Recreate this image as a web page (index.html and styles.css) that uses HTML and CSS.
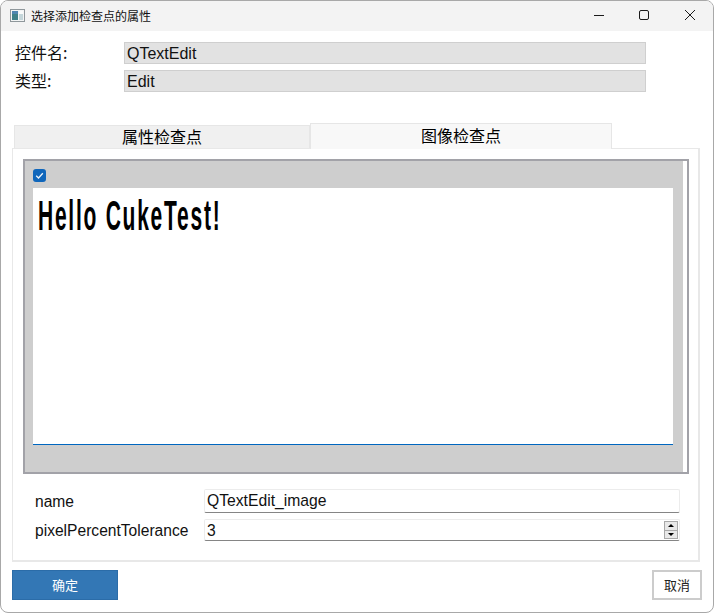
FILE: index.html
```html
<!DOCTYPE html>
<html lang="zh">
<head>
<meta charset="utf-8">
<title>选择添加检查点的属性</title>
<link rel="stylesheet" href="styles.css">
</head>
<body>
<div class="window">
  <header class="titlebar">
    <svg class="app-icon" width="15" height="13" viewBox="0 0 15 13">
      <rect x="0.5" y="0.5" width="14" height="12" fill="#f2f4f4" stroke="#8f979b"/>
      <rect x="2" y="2" width="6" height="9" fill="#3f8088"/>
      <rect x="2" y="2" width="6" height="3" fill="#4f86b0"/>
      <rect x="9" y="2" width="4" height="3" fill="#f8fafa"/>
      <rect x="9" y="5" width="4" height="6" fill="#c4d6da"/>
    </svg>
    <span class="title-text">选择添加检查点的属性</span>
    <div class="controls">
      <svg class="ctl" width="46" height="30" viewBox="0 0 46 30"><path d="M19 14.5H29" stroke="#1a1a1a" fill="none"/></svg>
      <svg class="ctl" width="46" height="30" viewBox="0 0 46 30"><rect x="18.5" y="9.5" width="9" height="9" rx="1.5" stroke="#1a1a1a" fill="none"/></svg>
      <svg class="ctl" width="46" height="30" viewBox="0 0 46 30"><path d="M18 9L28 19M28 9L18 19" stroke="#1a1a1a" fill="none"/></svg>
    </div>
  </header>
  <section class="info">
    <div class="info-row"><span class="info-label">控件名:</span><div class="readonly">QTextEdit</div></div>
    <div class="info-row"><span class="info-label">类型:</span><div class="readonly">Edit</div></div>
  </section>
  <nav class="tabs">
    <div class="tab">属性检查点</div>
    <div class="tab tab-active">图像检查点</div>
  </nav>
  <section class="pane">
    <div class="image-box">
      <div class="image-inner">
        <span class="checkbox">
          <svg width="9" height="9" viewBox="0 0 9 9"><path d="M1.2 4.8L3.5 7L7.8 2.2" stroke="#eef5fb" stroke-width="1.3" fill="none"/></svg>
        </span>
        <div class="canvas"><span class="hello">Hello CukeTest!</span></div>
      </div>
      <div class="image-strip"></div>
    </div>
    <div class="form">
      <div class="form-row form-row-name"><label class="form-label">name</label><div class="field">QTextEdit_image</div></div>
      <div class="form-row form-row-spin"><label class="form-label">pixelPercentTolerance</label>
        <div class="field field-spin"><span class="spin-value">3</span>
          <div class="spin">
            <span class="spin-btn"><i class="arrow-up"></i></span>
            <span class="spin-btn"><i class="arrow-down"></i></span>
          </div>
        </div>
      </div>
    </div>
  </section>
  <footer class="actions">
    <button class="btn btn-primary">确定</button>
    <button class="btn btn-cancel">取消</button>
  </footer>
</div>
</body>
</html>
```
FILE: styles.css
```css
* { box-sizing: border-box; }
html, body { margin: 0; padding: 0; background: #fff; }
body { width: 714px; height: 613px; overflow: hidden; font-family: "Liberation Sans", "Noto Sans CJK SC", sans-serif; color: #000; }
.window { width: 714px; height: 613px; border: 1px solid #a8a8a8; border-radius: 8px; overflow: hidden; background: #fff; display: flex; flex-direction: column; }
.titlebar { height: 30px; flex: none; background: #f3f3f3; display: flex; align-items: center; padding-left: 9px; }
.app-icon { flex: none; margin-bottom: 1px; }
.title-text { font-size: 12px; margin: 0 0 2px 6px; color: #111; font-family: "Noto Sans CJK SC", sans-serif; }
.controls { margin-left: auto; display: flex; }
.ctl { display: block; }
.info { padding: 11px 67px 0 14px; display: flex; flex-direction: column; gap: 6px; }
.info-row { display: flex; align-items: center; height: 22px; }
.info-label { width: 109px; font-size: 16px; padding-bottom: 2px; font-family: "Noto Sans CJK SC", sans-serif; color: #111; }
.readonly { flex: 1; height: 22px; background: #e2e2e2; border: 1px solid #cfcfcf; font-size: 16px; line-height: 21px; padding-left: 2px; color: #111; }
.tabs { display: flex; align-items: flex-end; margin: 31px 0 0 13px; height: 26px; position: relative; z-index: 1; }
.tab { width: 296px; height: 23px; background: #f0f0f0; border: 1px solid #e6e6e6; border-bottom: none; text-align: center; font-size: 16px; line-height: 21px; font-family: "Noto Sans CJK SC", sans-serif; margin-bottom: 1px; }
.tab-active { width: 302px; height: 26px; background: #f8f8f8; margin-bottom: 0; line-height: 23px; }
.pane { margin: -1px 13px 0 11px; height: 414px; border: 1px solid #e8e8e8; border-width: 1px 2px 2px 1px; padding: 10px 9px 0 10px; }
.image-box { height: 315px; border: 2px solid #a2a2a8; display: flex; background: #fff; }
.image-inner { flex: 1; background: #cecece; padding: 8px 10px 0 8px; display: flex; flex-direction: column; }
.image-strip { width: 4px; flex: none; }
.checkbox { width: 13px; height: 13px; border-radius: 3px; background: #0f66bb; display: flex; align-items: center; justify-content: center; flex: none; }
.canvas { margin-top: 6px; height: 257px; background: #fff; border-bottom: 1px solid #0067c0; padding: 4px 0 0 5px; overflow: hidden; }
.hello { display: block; width: 370px; transform: scaleX(0.5); transform-origin: left top; font-size: 42px; font-weight: bold; line-height: 47px; white-space: nowrap; letter-spacing: 3.5px; }
.form { margin-top: 15px; padding: 0 9px 0 12px; display: flex; flex-direction: column; gap: 6px; }
.form-row { display: flex; align-items: center; height: 24px; }
.form-row-spin { height: 22px; }
.form-row-name .form-label, .form-row-spin .form-label { padding-top: 1px; }
.form-row-spin .form-label { padding-top: 2px; }
.form-label { width: 169px; font-size: 15.6px; color: #111; flex: none; }
.field { flex: 1; height: 24px; border: 1px solid #ececec; border-bottom: 1px solid #858585; font-size: 15.7px; line-height: 22px; padding-left: 2px; color: #111; border-radius: 2px; }
.field-spin { height: 22px; line-height: 20px; display: flex; justify-content: space-between; align-items: center; padding-right: 1px; }
.spin-value { padding-top: 2px; }
.spin { width: 14px; height: 18px; display: flex; flex-direction: column; border: 1px solid #a8a8a8; background: #e8e8e8; }
.spin-btn { flex: 1; display: flex; align-items: center; justify-content: center; }
.spin-btn + .spin-btn { border-top: 1px solid #a8a8a8; }
.arrow-up { border: 3.5px solid transparent; border-top: none; border-bottom: 3.5px solid #000; }
.arrow-down { border: 3.5px solid transparent; border-bottom: none; border-top: 3.5px solid #000; }
.actions { display: flex; justify-content: space-between; padding: 8px 11px 0 11px; }
.btn { height: 30px; font-size: 13px; font-family: "Noto Sans CJK SC", sans-serif; padding: 0 0 2px; }
.btn-primary { width: 106px; background: #3377b5; border: 1px solid #2b6ca8; color: #fff; }
.btn-cancel { width: 50px; background: #fff; border: 2px solid #ccc; color: #222; }
```
